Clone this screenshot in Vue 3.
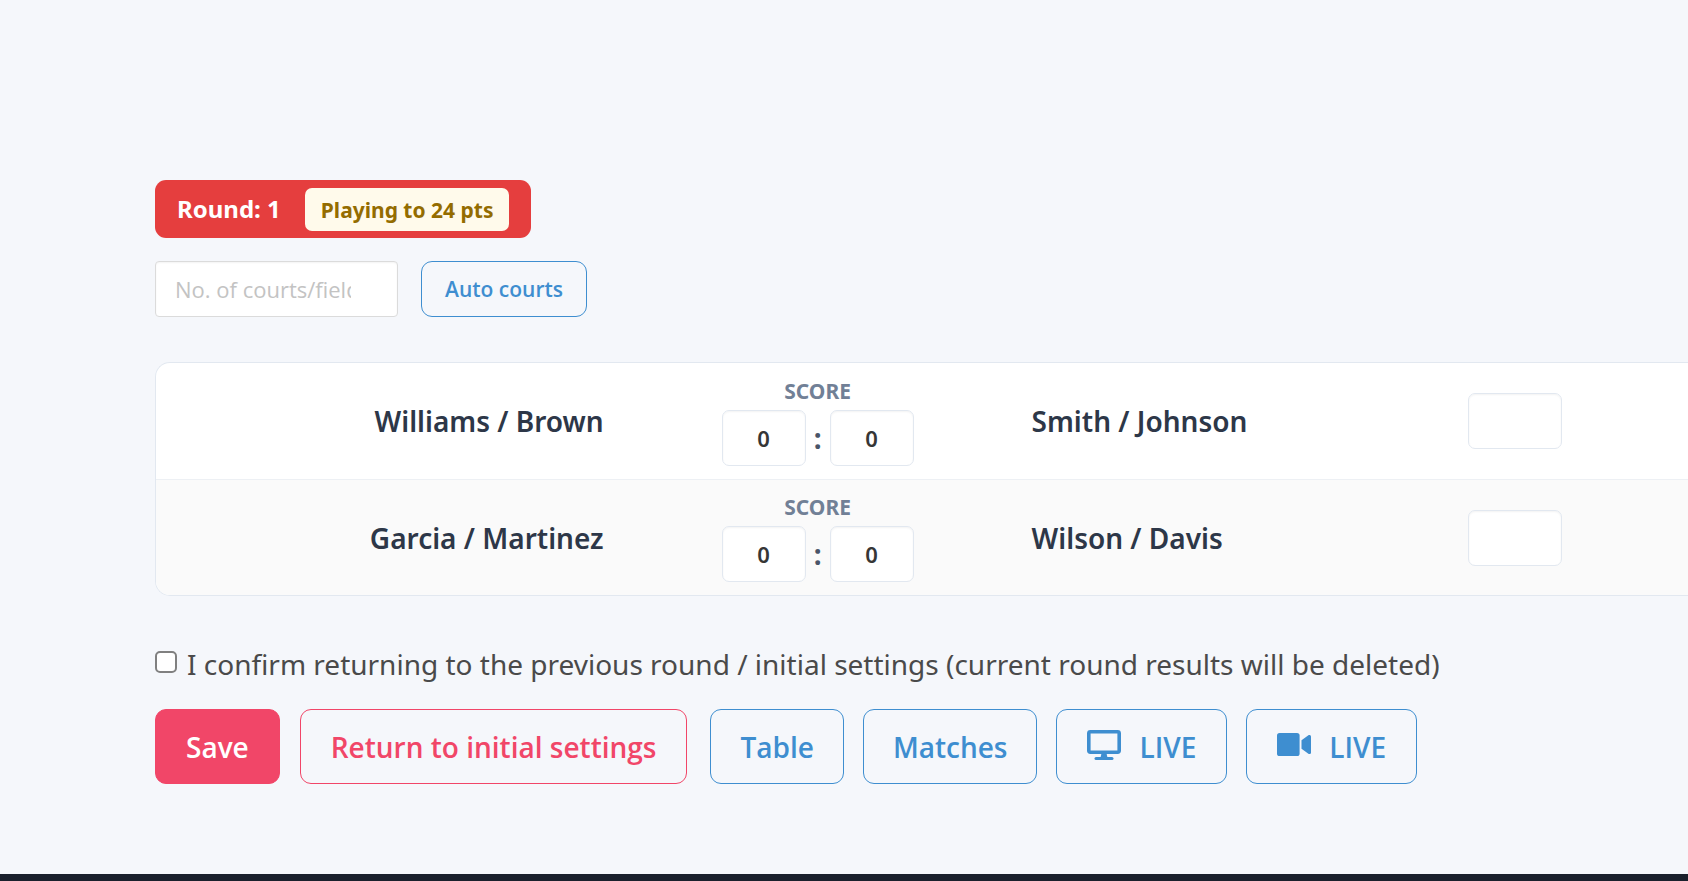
<script setup>
import { ref } from 'vue'

const courts = ref('')
const confirmed = ref(false)
const matches = ref([
  { home: 'Williams / Brown', away: 'Smith / Johnson', homeScore: 0, awayScore: 0, court: '' },
  { home: 'Garcia / Martinez', away: 'Wilson / Davis', homeScore: 0, awayScore: 0, court: '' },
])
</script>

<template>
  <div class="page">
    <main class="content">
      <div class="round">
        <span>Round: 1</span>
        <span class="points">Playing to 24 pts</span>
      </div>

      <div class="courts">
        <input v-model="courts" class="courts-input" type="text" aria-label="Number of courts" placeholder="No. of courts/fields" />
        <button class="btn btn-small" type="button">Auto courts</button>
      </div>

      <div class="card">
        <table>
          <colgroup>
            <col class="col-home" />
            <col class="col-score" />
            <col class="col-away" />
            <col />
          </colgroup>
          <tbody>
            <tr v-for="match in matches" :key="match.home">
              <td class="home">{{ match.home }}</td>
              <td>
                <div class="score-label">SCORE</div>
                <div class="score">
                  <input v-model="match.homeScore" type="text" :aria-label="match.home + ' score'" />
                  <span>:</span>
                  <input v-model="match.awayScore" type="text" :aria-label="match.away + ' score'" />
                </div>
              </td>
              <td class="away">{{ match.away }}</td>
              <td class="court"><input v-model="match.court" type="text" aria-label="Court" /></td>
            </tr>
          </tbody>
        </table>
      </div>

      <label class="confirm">
        <input v-model="confirmed" type="checkbox" />
        <span>I confirm returning to the previous round / initial settings (current round results will be deleted)</span>
      </label>

      <div class="actions">
        <button class="btn btn-save" type="button">Save</button>
        <button class="btn btn-return" type="button">Return to initial settings</button>
        <div class="links">
          <button class="btn btn-link" type="button">Table</button>
          <button class="btn btn-link" type="button">Matches</button>
          <button class="btn" type="button">
            <svg width="34" height="34" viewBox="0 0 34 34" aria-hidden="true">
              <rect x="1.8" y="1.8" width="30.4" height="20.4" rx="1.6" fill="none" stroke="currentColor" stroke-width="3.6" />
              <path d="M14.5 23h5l.8 4h-6.6z" fill="currentColor" />
              <rect x="7.5" y="27" width="19" height="3" rx="1.5" fill="currentColor" />
            </svg>
            LIVE
          </button>
          <button class="btn" type="button">
            <svg width="34" height="34" viewBox="0 0 34 34" aria-hidden="true">
              <rect x="0" y="3" width="22.6" height="23" rx="2.6" fill="currentColor" />
              <path d="M24.5 10.2l6.900-4.900c1.200-.8 2.600 0 2.600 1.300v15.800c0 1.300-1.400 2.100-2.600 1.300l-6.900-4.900z" fill="currentColor" />
            </svg>
            LIVE
          </button>
        </div>
      </div>
    </main>
    <footer class="footer"></footer>
  </div>
</template>

<style>
body {
  margin: 0;
  background: #f5f7fb;
}
</style>

<style scoped>
* {
  box-sizing: border-box;
}
.page {
  display: flex;
  flex-direction: column;
  height: 100vh;
  overflow: hidden;
  color: #4a4a4a;
  font: 28px/40px "Segoe UI", "Noto Sans", "Open Sans", sans-serif;
}
.content {
  flex: 1;
  padding: 180px 0 0 155px;
}
.footer {
  height: 7px;
  background: #1a202c;
}
input,
button {
  font: inherit;
}
.round {
  display: flex;
  align-items: center;
  gap: 24px;
  width: fit-content;
  height: 58px;
  padding: 0 22px;
  border-radius: 11px;
  background: #e53e3e;
  color: #fff;
  font-size: 24px;
  font-weight: 700;
}
.points {
  padding: 2px 16px 1px;
  border-radius: 7px;
  background: #fffaeb;
  color: #946c00;
  font-size: 21px;
}
.courts {
  display: flex;
  gap: 23px;
  margin-top: 23px;
}
.courts-input {
  width: 243px;
  height: 56px;
  padding: 0 46px 0 19px;
  border: 1px solid #dbdbdb;
  border-radius: 4px;
  background: #fff;
  box-shadow: inset 0 1px 2px rgba(10, 10, 10, 0.05);
  color: #363636;
  font-family: "Segoe UI", "Open Sans", "Noto Sans", sans-serif;
  font-size: 22px;
}
.courts-input::placeholder {
  color: #c3c3c3;
  opacity: 1;
}
.btn {
  display: inline-flex;
  align-items: center;
  justify-content: center;
  gap: 18px;
  height: 75px;
  padding: 0 30px;
  border: 1px solid #3e8ed0;
  border-radius: 11px;
  background: transparent;
  color: #3e8ed0;
  font-family: "Segoe UI", "Open Sans", "Noto Sans", sans-serif;
  font-weight: 600;
  white-space: nowrap;
}
.btn-small {
  height: 56px;
  padding: 0 23px;
  font-size: 21px;
}
.btn-link {
  padding: 0 29px;
}
.btn-save {
  border-color: #f14668;
  background: #f14668;
  color: #fff;
}
.btn-return {
  border-color: #f14668;
  color: #f14668;
}
.card {
  margin-top: 45px;
  border: 1px solid #e2e8f0;
  border-right: 0;
  border-radius: 15px 0 0 15px;
  background: #fff;
  overflow: hidden;
}
table {
  width: 100%;
  table-layout: fixed;
  border-spacing: 0;
}
.col-home {
  width: 30%;
}
.col-score {
  width: 404px;
}
.col-away {
  width: 28%;
}
td {
  height: 116px;
  padding: 0;
  color: #2d3748;
}
tr:nth-child(even) td {
  background: #fafafa;
}
tr + tr td {
  border-top: 1px solid #edf0f4;
}
.home,
.away {
  font-weight: 600;
}
.home {
  padding-right: 12px;
  text-align: right;
}
.away {
  padding-left: 12px;
}
.score-label {
  color: #718096;
  font-size: 21px;
  font-weight: 700;
  line-height: 28px;
  text-align: center;
}
.score {
  display: flex;
  align-items: center;
  justify-content: center;
  gap: 8px;
  margin-top: 5px;
}
.score span {
  width: 8px;
  color: #4a5568;
  font-weight: 700;
  text-align: center;
}
.score input,
.court input {
  height: 56px;
  border: 1px solid #e2e8f0;
  border-radius: 7px;
  background: #fff;
  box-shadow: inset 0 1px 2px rgba(10, 10, 10, 0.05);
  color: #363636;
  font-size: 22px;
  font-weight: 600;
  text-align: center;
}
.score input {
  width: 84px;
}
.court {
  padding-left: 19px;
}
.court input {
  display: block;
  width: 94px;
}
.confirm {
  display: flex;
  align-items: flex-start;
  gap: 10px;
  width: fit-content;
  margin-top: 48px;
  white-space: nowrap;
}
.confirm input {
  appearance: none;
  width: 22px;
  height: 22px;
  margin: 7px 0 0;
  border: 2px solid #808080;
  border-radius: 5px;
  background: #fff;
}
.confirm input:checked {
  border-color: #3e8ed0;
  background: #3e8ed0;
}
.actions {
  display: flex;
  gap: 20px;
  margin-top: 25px;
}
.links {
  display: flex;
  gap: 19px;
  margin-left: 3px;
}
</style>
